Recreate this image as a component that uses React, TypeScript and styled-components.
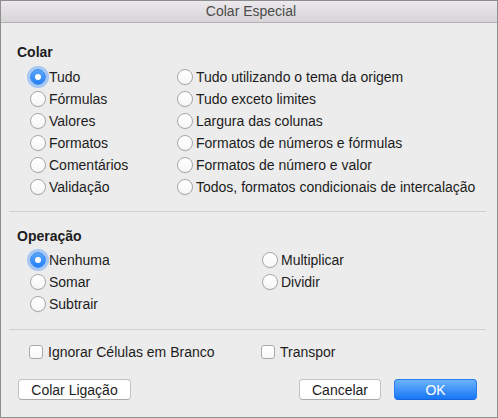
import React from 'react'
import styled, { createGlobalStyle } from 'styled-components'

const GlobalStyle = createGlobalStyle`
    html, body {
        margin: 0;
        padding: 0;
        background: #ececec;
    }
    body {
        font-family: "Liberation Sans", Arial, sans-serif;
        font-size: 14px;
        color: #1c1c1c;
    }
`

const colarLeft = ['Tudo', 'Fórmulas', 'Valores', 'Formatos', 'Comentários', 'Validação']
const colarRight = [
    'Tudo utilizando o tema da origem',
    'Tudo exceto limites',
    'Largura das colunas',
    'Formatos de números e fórmulas',
    'Formatos de número e valor',
    'Todos, formatos condicionais de intercalação',
]

const Radio: React.FunctionComponent<{ label: string; checked?: boolean }> = ({ label, checked }) => (
    <Option>
        <RadioDot checked={!!checked} />
        <span>{label}</span>
    </Option>
)

const Check: React.FunctionComponent<{ label: string }> = ({ label }) => (
    <Option>
        <CheckBox />
        <CheckLabel>{label}</CheckLabel>
    </Option>
)

export default function App() {
    // interleave the two columns so the grid fills row by row
    const colarRows: string[] = []
    colarLeft.forEach((item, i) => {
        colarRows.push(item)
        colarRows.push(colarRight[i])
    })

    return (
        <>
            <GlobalStyle />
            <Window>
                <TitleBar>Colar Especial</TitleBar>
                <Section>
                    <Heading>Colar</Heading>
                    <OptionGrid left={147}>
                        {colarRows.map((label) => (
                            <Radio key={label} label={label} checked={label === 'Tudo'} />
                        ))}
                    </OptionGrid>
                </Section>
                <Separator />
                <Section top={16} bottom={14}>
                    <Heading gap={5}>Operação</Heading>
                    <OptionGrid left={232}>
                        <Radio label="Nenhuma" checked />
                        <Radio label="Multiplicar" />
                        <Radio label="Somar" />
                        <Radio label="Dividir" />
                        <Radio label="Subtrair" />
                    </OptionGrid>
                </Section>
                <Separator />
                <CheckRow>
                    <Check label="Ignorar Células em Branco" />
                    <Check label="Transpor" />
                </CheckRow>
                <ButtonBar>
                    <Button width={113}>Colar Ligação</Button>
                    <Spacer />
                    <Button width={82}>Cancelar</Button>
                    <Button width={83} primary>OK</Button>
                </ButtonBar>
            </Window>
        </>
    )
}

const Window = styled.div`
    box-sizing: border-box;
    width: 498px;
    height: 418px;
    border: 1px solid #8e8e8e;
    background: #ececec;
    display: flex;
    flex-direction: column;
`

const TitleBar = styled.div`
    height: 21px;
    border-bottom: 1px solid #b3b3b3;
    background: linear-gradient(#ebe9eb, #d6d4d6);
    color: #4b4b4b;
    font-size: 14px;
    line-height: 21px;
    text-align: center;
    padding-left: 4px;
`

const Section = styled.div<{ top?: number; bottom?: number }>`
    padding: ${(p) => p.top ?? 21}px 0 ${(p) => p.bottom ?? 13}px 16px;
`

const Heading = styled.div<{ gap?: number }>`
    font-weight: bold;
    line-height: 16px;
    margin-bottom: ${(p) => p.gap ?? 6}px;
`

const OptionGrid = styled.div<{ left: number }>`
    display: grid;
    grid-template-columns: ${(p) => p.left}px 1fr;
    grid-auto-rows: 22px;
    padding-left: 13px;
`

const Separator = styled.div`
    height: 1px;
    background: #d0d0d0;
    margin: 0 11px 0 8px;
`

const Option = styled.label`
    display: flex;
    align-items: center;
    gap: 3px;
    white-space: nowrap;
    height: 22px;
`

const RadioDot = styled.span<{ checked: boolean }>`
    box-sizing: border-box;
    flex: none;
    width: 16px;
    height: 16px;
    border-radius: 50%;
    position: relative;
    border: 1px solid ${(p) => (p.checked ? '#3a8bf0' : '#a7a7a7')};
    background: ${(p) => (p.checked ? 'linear-gradient(#5aa6fb, #2581f6)' : 'linear-gradient(#ffffff, #f6f6f6)')};
    box-shadow: ${(p) => (p.checked ? '0 0 0 3px rgba(110, 168, 250, 0.55)' : '0 0.5px 0.5px rgba(0,0,0,0.08)')};

    &::after {
        content: '';
        display: ${(p) => (p.checked ? 'block' : 'none')};
        position: absolute;
        left: 4px;
        top: 4px;
        width: 6px;
        height: 6px;
        border-radius: 50%;
        background: #fff;
    }
`

const CheckRow = styled.div`
    display: grid;
    grid-template-columns: 232px 1fr;
    padding: 11px 0 0 28px;
`

const CheckBox = styled.span`
    box-sizing: border-box;
    flex: none;
    width: 14px;
    height: 14px;
    border-radius: 3px;
    border: 1px solid #a9a9a9;
    background: linear-gradient(#ffffff, #f7f7f7);
`

const CheckLabel = styled.span`
    padding-left: 2px;
`

const ButtonBar = styled.div`
    display: flex;
    align-items: center;
    gap: 13px;
    padding: 16px 20px 0 16px;
`

const Spacer = styled.div`
    flex: 1;
`

const Button = styled.button<{ width: number; primary?: boolean }>`
    box-sizing: border-box;
    width: ${(p) => p.width}px;
    height: 21px;
    padding: 0;
    font-family: "Liberation Sans", Arial, sans-serif;
    font-size: 14px;
    border-radius: 4px;
    color: ${(p) => (p.primary ? '#ffffff' : '#1c1c1c')};
    border: 1px solid ${(p) => (p.primary ? '#2a7af0' : '#c2c2c2')};
    border-bottom-color: ${(p) => (p.primary ? '#1764e0' : '#a9a9a9')};
    background: ${(p) => (p.primary ? 'linear-gradient(#6cb4fb, #1776f6)' : '#ffffff')};
    &:first-child {
        margin-left: 1px;
    }
`
